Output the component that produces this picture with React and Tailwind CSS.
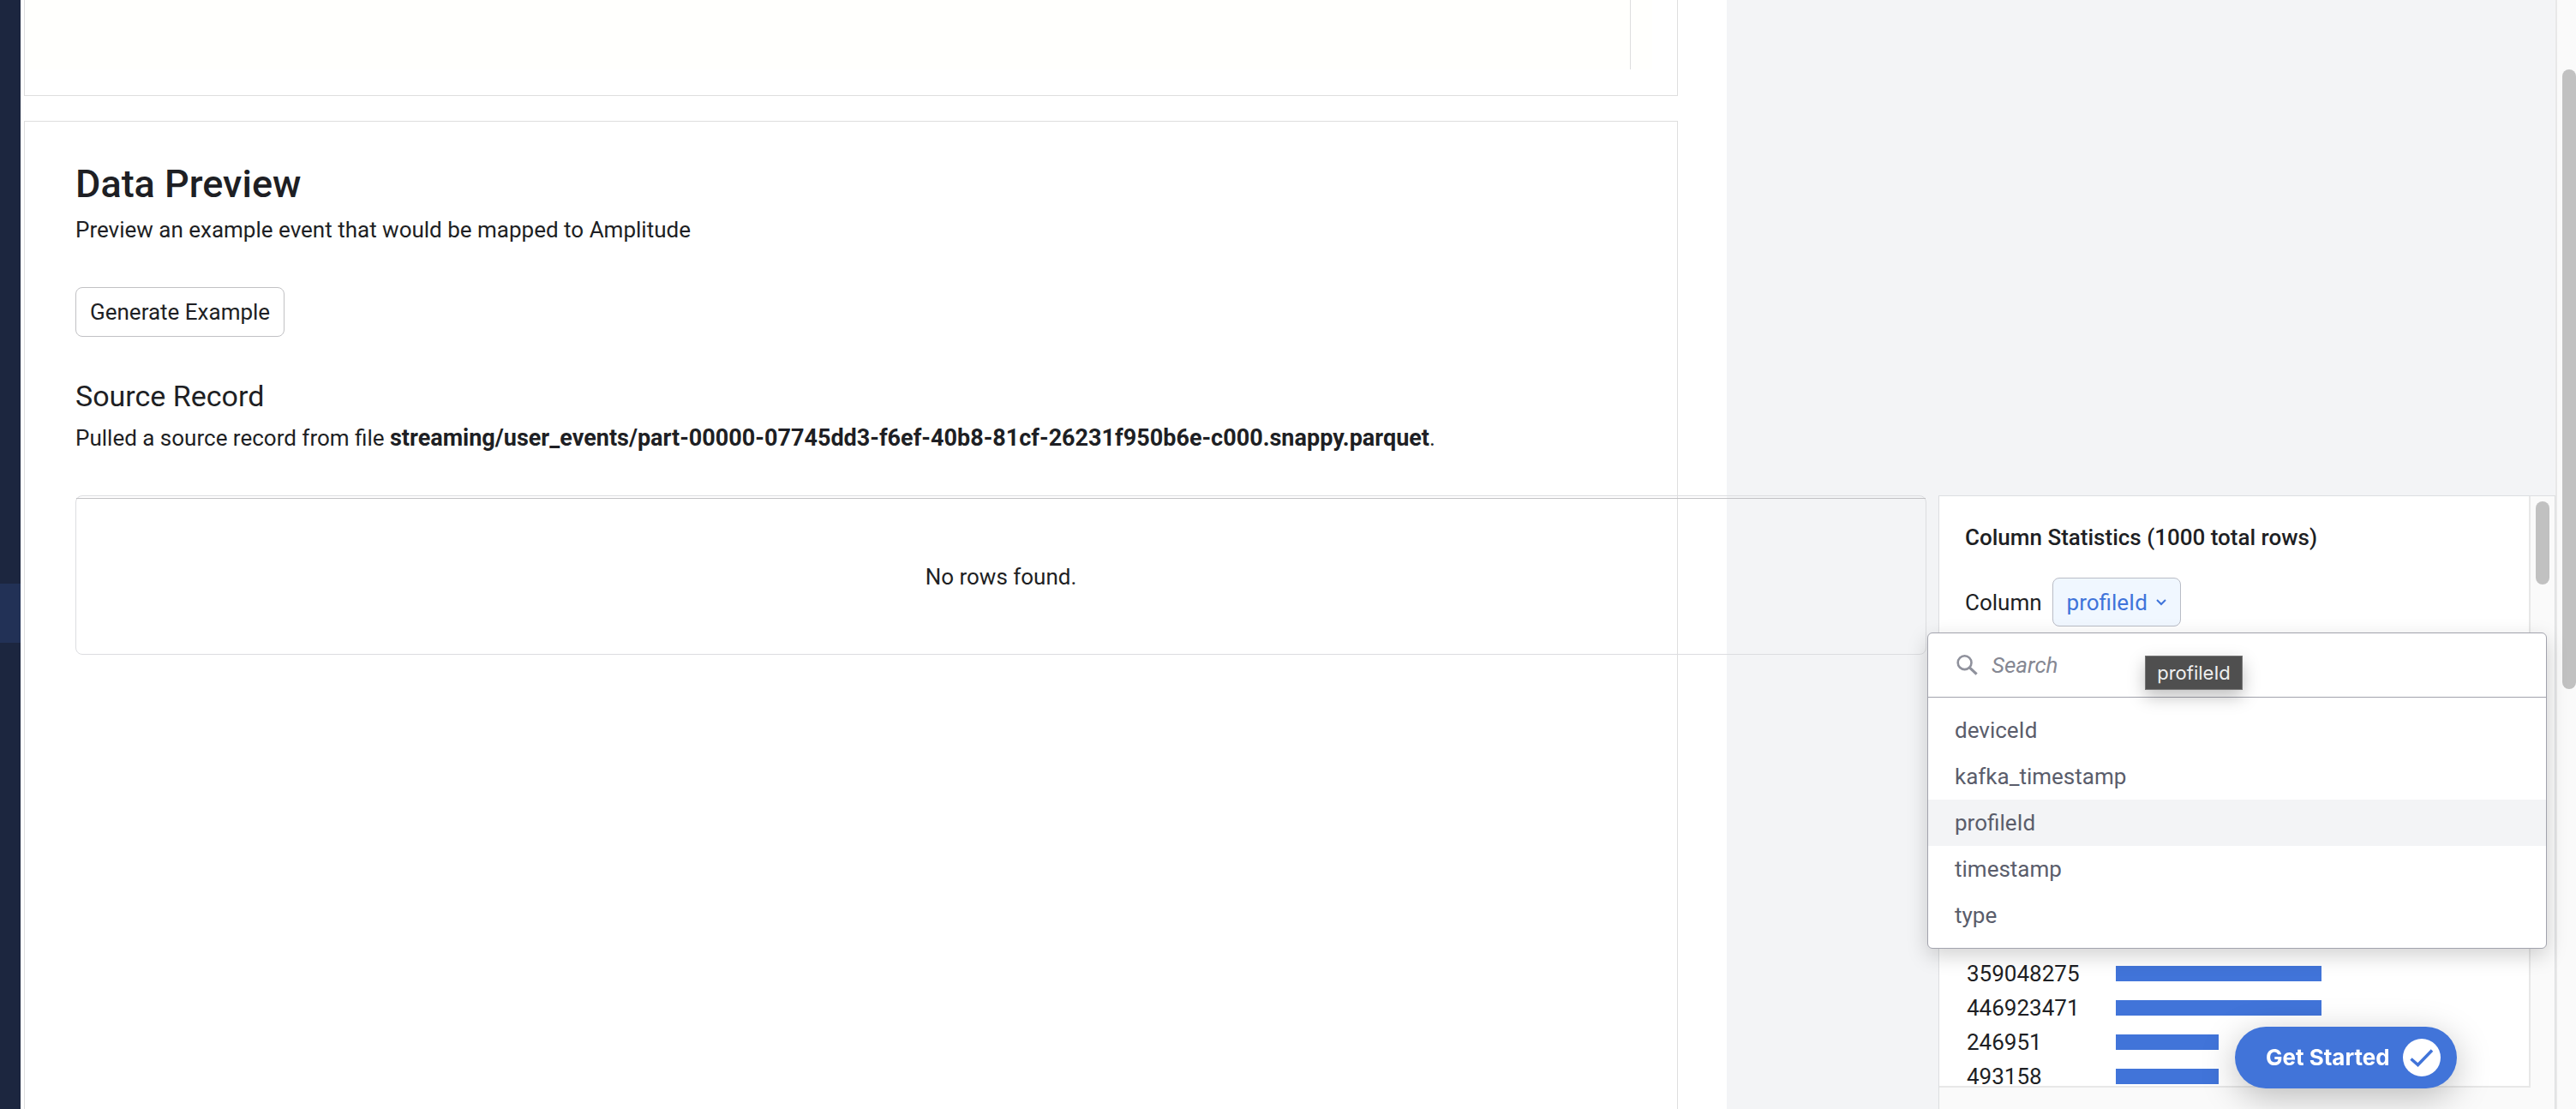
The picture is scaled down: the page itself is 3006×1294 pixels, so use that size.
import React, { useState } from "react";

const columns = ["deviceId", "kafka_timestamp", "profileId", "timestamp", "type"];

const topValues = [
  { value: "359048275", share: 240 },
  { value: "446923471", share: 240 },
  { value: "246951", share: 120 },
  { value: "493158", share: 120 },
];

function SideRail() {
  return (
    <nav aria-label="Main" className="flex w-6 shrink-0 flex-col bg-[#1c263f]">
      <a href="#sources" aria-label="Sources" className="mt-[681px] block h-[69px] bg-[#223156]" />
    </nav>
  );
}

function MappingCard() {
  return (
    <section className="mr-[57px] ml-1 h-28 border border-t-0 border-[#dedede] pr-[29px] pb-[30px]">
      <div className="h-full bg-[#fffffd] pr-[25px]">
        <div className="h-full border-r border-[#dedede]" />
      </div>
    </section>
  );
}

function ColumnMenu({ selected, onSelect }) {
  return (
    <div className="absolute top-[159px] -left-[14px] z-10 w-[723px] rounded-md border border-[#a2a3ad] bg-white shadow-[0_8px_24px_rgba(0,0,0,0.18)]">
      <label className="flex h-[75px] items-center gap-4 border-b border-[#a2a3ad] pl-[33px]">
        <svg viewBox="0 0 25 24" className="h-6 w-[25px]" fill="none" stroke="#8f919c" strokeWidth="2.6">
          <circle cx="9.6" cy="9.2" r="7.9" />
          <path d="M15 14.6 23.6 22.6" strokeWidth="3.2" />
        </svg>
        <input
          aria-label="Search columns"
          placeholder="Search"
          className="w-[560px] bg-transparent italic outline-none placeholder:text-[#858792]"
        />
      </label>
      <ul className="py-[11px] text-[#5a5d6b]">
        {columns.map((name) => (
          <li key={name}>
            <button
              type="button"
              onClick={() => onSelect(name)}
              className={
                name === selected
                  ? "block h-[54px] w-full bg-[#f3f4f6] pl-[31px] text-left"
                  : "block h-[54px] w-full bg-white pl-[31px] text-left"
              }
            >
              {name}
            </button>
          </li>
        ))}
      </ul>
      <div
        role="tooltip"
        className="absolute top-[26px] left-[253px] flex h-10 w-[114px] items-center justify-center border border-[#757575] bg-[#4f4f4f] font-['Inter',sans-serif] text-[22px] text-[#efefef] shadow-[0_8px_20px_rgba(0,0,0,0.25)]"
      >
        profileId
      </div>
    </div>
  );
}

function ColumnStatistics() {
  const [selected, setSelected] = useState("profileId");
  return (
    <aside className="relative flex h-[800px] w-[720px] shrink-0 border-x border-t border-[#dcdee1] bg-[#fafafa]">
      <div className="flex h-[690px] flex-1 flex-col border-r-2 border-b-2 border-[#e8e8e8] bg-white pt-7 pl-[30px]">
        <h3 className="font-medium leading-10">Column Statistics (1000 total rows)</h3>
        <div className="mt-[27px] flex items-center gap-3">
          <span>Column</span>
          <button
            type="button"
            aria-haspopup="listbox"
            className="flex h-[57px] items-center gap-[10px] rounded-lg border border-[#b9bcc6] bg-[#f0f7ff] px-4 text-[#3f74da]"
          >
            {selected}
            <svg viewBox="0 0 12 8" className="h-2 w-3" fill="none" stroke="currentColor" strokeWidth="2">
              <path d="M1 1l5 5 5-5" />
            </svg>
          </button>
        </div>
        <table className="mt-[385px] leading-6">
          <tbody>
            {topValues.map((row) => (
              <tr key={row.value} className="h-10">
                <td className="w-44 p-0 pl-[2px]">{row.value}</td>
                <td className="p-0">
                  <div className="h-[18px] bg-[#4174d9]" style={{ width: row.share }} />
                </td>
              </tr>
            ))}
          </tbody>
        </table>
      </div>
      <div className="w-7 pt-[6px] pl-[6px]">
        <div className="h-[97px] w-4 rounded-full bg-[#c1c1c1]" />
      </div>
      <ColumnMenu selected={selected} onSelect={setSelected} />
    </aside>
  );
}

export default function App() {
  return (
    <div className="flex h-screen overflow-hidden bg-white font-['Roboto',sans-serif] text-[26px] leading-10 text-[#1e1f24]">
      <SideRail />
      <div className="min-w-0 flex-1 bg-[#f3f4f6] pr-[967px]">
        <main className="bg-white">
          <MappingCard />
          <section className="mt-[29px] mr-[57px] ml-1 min-h-screen border border-[#dedede] pt-[46px] pl-[59px]">
            <h1 className="text-[45px] font-medium leading-[54px]">Data Preview</h1>
            <p className="mt-[6px]">Preview an example event that would be mapped to Amplitude</p>
            <button type="button" className="mt-[47px] block h-[58px] rounded-lg border border-[#c1c1c4] px-4">
              Generate Example
            </button>
            <h2 className="mt-[46px] text-[34px] leading-[46px]">Source Record</h2>
            <p className="mt-[6px]">
              Pulled a source record from file{" "}
              <strong className="text-[27px] font-bold">
                streaming/user_events/part-00000-07745dd3-f6ef-40b8-81cf-26231f950b6e-c000.snappy.parquet
              </strong>
              .
            </p>
            <div className="mt-[47px] -mr-[1025px] flex gap-[14px]">
              <div className="h-[186px] flex-1 rounded-lg border border-[#dcdde0] pt-[2px]">
                <div className="flex h-full items-center justify-center border-t border-[#c1c1c4]">No rows found.</div>
              </div>
              <ColumnStatistics />
            </div>
          </section>
        </main>
      </div>
      <div className="w-6 shrink-0 border-l-2 border-[#e8e8e8] bg-[#fafafa] pt-[81px] pl-[6px]">
        <div className="h-[723px] w-4 rounded-full bg-[#c1c1c1]" />
      </div>
      <button
        type="button"
        className="fixed right-[139px] bottom-6 z-20 flex h-[72px] w-[259px] items-center justify-between rounded-full bg-[#4174d9] pr-[19px] pl-9 font-['Inter',sans-serif] text-[26px] font-bold text-white shadow-[0_10px_40px_rgba(0,0,0,0.25)]"
      >
        Get Started
        <svg viewBox="0 0 44 44" className="size-11" fill="none">
          <circle cx="22" cy="22" r="22" fill="white" />
          <path d="M9.500 23.500l8 7 16.500-17" stroke="#4174d9" strokeWidth="3.500" />
        </svg>
      </button>
    </div>
  );
}
